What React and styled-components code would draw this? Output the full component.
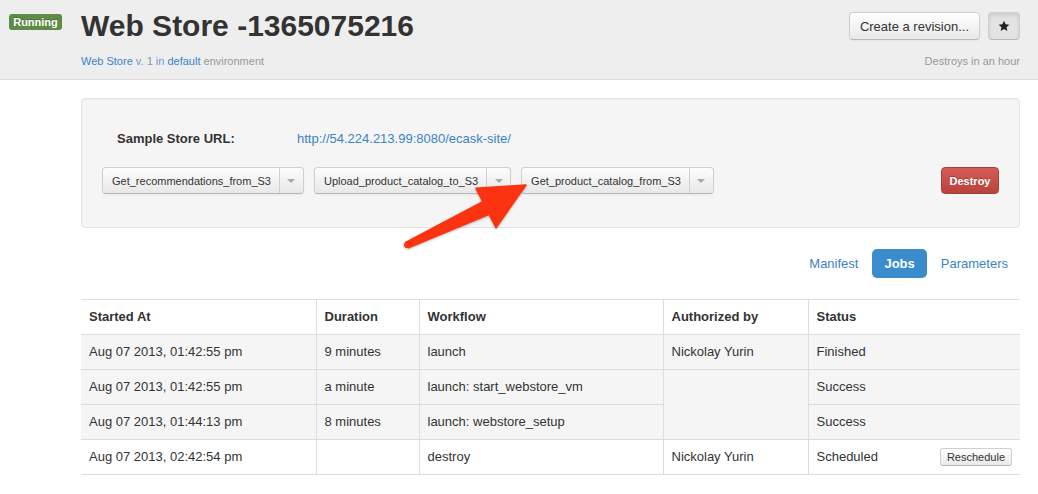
import styled, { createGlobalStyle } from 'styled-components';

const GlobalStyle = createGlobalStyle`
  html, body {
    margin: 0;
    padding: 0;
    background: #ffffff;
  }
  body {
    font-family: 'Liberation Sans', Helvetica, Arial, sans-serif;
    font-size: 13px;
    color: #333333;
  }
`;

const Page = styled.div`
  position: relative;
  width: 1038px;
  min-height: 494px;
  overflow: hidden;
`;

const Header = styled.header`
  display: flex;
  align-items: flex-start;
  background: #eeeeee;
  border-bottom: 1px solid #dddddd;
  padding: 12px 18px 10px 9px;
`;

const StatusBadge = styled.span`
  flex-shrink: 0;
  width: 53px;
  height: 16px;
  margin: 2px 19px 0 0;
  box-sizing: border-box;
  border-radius: 3px;
  background: #5e8c47;
  color: #ffffff;
  font-size: 11px;
  font-weight: 700;
  line-height: 16px;
  text-align: center;
  text-shadow: 0 -1px 0 rgba(0, 0, 0, 0.25);
`;

const TitleBlock = styled.div`
  flex: 1;
`;

const Title = styled.h1`
  margin: 0;
  font-size: 30px;
  line-height: 28px;
  font-weight: 700;
  color: #333333;
`;

const Meta = styled.div`
  margin-top: 13px;
  font-size: 11px;
  line-height: 16px;
  color: #999999;
  text-align: ${({ $align }) => $align || 'left'};
`;

const MetaLink = styled.a`
  color: ${({ $muted }) => ($muted ? '#6f9cc6' : '#3a83c4')};
  text-decoration: none;
`;

const Actions = styled.div`
  display: flex;
  flex-direction: column;
  align-items: flex-end;
`;

const ActionRow = styled.div`
  display: flex;
  gap: 8px;
`;

const Button = styled.button`
  height: 28px;
  padding: 0 10px;
  font-family: inherit;
  font-size: 13px;
  color: #333333;
  border: 1px solid #cfcfcf;
  border-bottom-color: #b8b8b8;
  border-radius: 4px;
  background: ${({ $active }) =>
    $active ? '#e3e3e3' : 'linear-gradient(#ffffff, #e9e9e9)'};
  box-shadow: ${({ $active }) =>
    $active
      ? 'inset 0 2px 4px rgba(0, 0, 0, 0.12)'
      : 'inset 0 1px 0 rgba(255, 255, 255, 0.3), 0 1px 2px rgba(0, 0, 0, 0.05)'};
  display: inline-flex;
  align-items: center;
  justify-content: center;
  cursor: pointer;
`;

const StarButton = styled(Button)`
  width: 32px;
  padding: 0;
`;

const Content = styled.main`
  margin: 0 18px 0 81px;
  padding-top: 18px;
`;

const Well = styled.section`
  background: #f5f5f5;
  border: 1px solid #e3e3e3;
  border-radius: 4px;
  padding: 31px 20px 33px;
  box-shadow: inset 0 1px 1px rgba(0, 0, 0, 0.03);
`;

const UrlRow = styled.div`
  display: flex;
  margin: 0 0 19px 15px;
  line-height: 18px;
`;

const UrlLabel = styled.div`
  width: 180px;
  font-weight: 700;
`;

const UrlLink = styled.a`
  color: #3a83c4;
  text-decoration: none;
`;

const ControlRow = styled.div`
  display: flex;
  align-items: center;
  gap: 10px;
`;

const SplitGroup = styled.div`
  display: flex;
  height: 27px;
  border: 1px solid #d0d0d0;
  border-bottom-color: #b9b9b9;
  border-radius: 4px;
  background: linear-gradient(#fdfdfd, #e8e8e8);
  box-shadow: 0 1px 2px rgba(0, 0, 0, 0.06);
  box-sizing: border-box;
`;

const SplitMain = styled.span`
  display: flex;
  align-items: center;
  padding: 0 8px 0 9px;
  font-size: 11px;
  color: #333333;
  border-right: 1px solid #cfcfcf;
`;

const SplitCaret = styled.span`
  width: 23px;
  display: flex;
  align-items: center;
  justify-content: center;

  &::after {
    content: '';
    border-left: 4px solid transparent;
    border-right: 4px solid transparent;
    border-top: 4px solid #a8a8a8;
  }
`;

const DangerButton = styled.button`
  margin-left: auto;
  height: 27px;
  width: 58px;
  padding: 0;
  font-family: inherit;
  font-size: 11px;
  font-weight: 700;
  color: #ffffff;
  text-shadow: 0 -1px 0 rgba(0, 0, 0, 0.25);
  border: 1px solid #a9403a;
  border-radius: 4px;
  background: linear-gradient(#d65d55, #b8423c);
`;

const Tabs = styled.nav`
  display: flex;
  justify-content: flex-end;
  gap: 2px;
  margin: 21px 0;
`;

const Tab = styled.a`
  padding: 6px 12px;
  line-height: 17px;
  font-size: 13px;
  border-radius: 5px;
  text-decoration: none;
  color: ${({ $active }) => ($active ? '#ffffff' : '#3a83c4')};
  background: ${({ $active }) => ($active ? '#3b8ccd' : 'transparent')};
  font-weight: ${({ $active }) => ($active ? 700 : 400)};
`;

const Table = styled.table`
  width: 100%;
  border-collapse: collapse;
  table-layout: fixed;
  border-top: 1px solid #dddddd;
  border-bottom: 1px solid #dddddd;
`;

const Col = styled.col`
  width: ${({ $w }) => $w}px;
`;

const Th = styled.th`
  padding: 8px;
  line-height: 18px;
  text-align: left;
  font-weight: 700;
  border-left: 1px solid #dddddd;
  border-bottom: 1px solid #dddddd;
  background: #ffffff;

  &:first-child {
    border-left: none;
  }
`;

const Td = styled.td`
  padding: 8px;
  line-height: 18px;
  vertical-align: top;
  border-top: 1px solid #dddddd;
  border-left: 1px solid #dddddd;
  background: ${({ $shade }) => ($shade ? '#f5f5f5' : '#ffffff')};

  &:first-child {
    border-left: none;
  }
`;

const SmallButton = styled.button`
  float: right;
  height: 18px;
  padding: 0 6px;
  font-family: inherit;
  font-size: 11px;
  color: #333333;
  border: 1px solid #cfcfcf;
  border-bottom-color: #b5b5b5;
  border-radius: 3px;
  background: linear-gradient(#ffffff, #e8e8e8);
`;

const ArrowOverlay = styled.svg`
  position: absolute;
  left: 400px;
  top: 180px;
  pointer-events: none;
  filter: drop-shadow(0 1px 1px rgba(0, 0, 0, 0.25));
`;

const SPLITS = [
  'Get_recommendations_from_S3',
  'Upload_product_catalog_to_S3',
  'Get_product_catalog_from_S3',
];

const COLUMNS = [
  { label: 'Started At', w: 235 },
  { label: 'Duration', w: 103 },
  { label: 'Workflow', w: 244 },
  { label: 'Authorized by', w: 145 },
  { label: 'Status', w: 212 },
];

function StarIcon() {
  return (
    <svg width="12" height="12" viewBox="0 0 24 24">
      <path
        d="M12 1.5l3.2 7 7.6.8-5.7 5.1 1.6 7.6L12 18.1 5.3 22l1.6-7.6L1.2 9.3l7.6-.8z"
        fill="#222222"
      />
    </svg>
  );
}

export default function App() {
  return (
    <Page>
      <GlobalStyle />
      <Header>
        <StatusBadge>Running</StatusBadge>
        <TitleBlock>
          <Title>Web Store -1365075216</Title>
          <Meta>
            <MetaLink href="#">Web Store</MetaLink>
            <MetaLink $muted href="#"> v. 1 in </MetaLink>
            <MetaLink href="#">default</MetaLink> environment
          </Meta>
        </TitleBlock>
        <Actions>
          <ActionRow>
            <Button>Create a revision...</Button>
            <StarButton $active aria-label="Favorite">
              <StarIcon />
            </StarButton>
          </ActionRow>
          <Meta $align="right">Destroys in an hour</Meta>
        </Actions>
      </Header>

      <Content>
        <Well>
          <UrlRow>
            <UrlLabel>Sample Store URL:</UrlLabel>
            <UrlLink href="#">http://54.224.213.99:8080/ecask-site/</UrlLink>
          </UrlRow>
          <ControlRow>
            {SPLITS.map((name) => (
              <SplitGroup key={name}>
                <SplitMain>{name}</SplitMain>
                <SplitCaret />
              </SplitGroup>
            ))}
            <DangerButton>Destroy</DangerButton>
          </ControlRow>
        </Well>

        <Tabs>
          <Tab href="#">Manifest</Tab>
          <Tab href="#" $active>Jobs</Tab>
          <Tab href="#">Parameters</Tab>
        </Tabs>

        <Table>
          <colgroup>
            {COLUMNS.map((c) => (
              <Col key={c.label} $w={c.w} />
            ))}
          </colgroup>
          <thead>
            <tr>
              {COLUMNS.map((c) => (
                <Th key={c.label}>{c.label}</Th>
              ))}
            </tr>
          </thead>
          <tbody>
            <tr>
              <Td $shade>Aug 07 2013, 01:42:55 pm</Td>
              <Td $shade>9 minutes</Td>
              <Td $shade>launch</Td>
              <Td $shade>Nickolay Yurin</Td>
              <Td $shade>Finished</Td>
            </tr>
            <tr>
              <Td $shade>Aug 07 2013, 01:42:55 pm</Td>
              <Td $shade>a minute</Td>
              <Td $shade>launch: start_webstore_vm</Td>
              <Td $shade rowSpan={2}></Td>
              <Td $shade>Success</Td>
            </tr>
            <tr>
              <Td $shade>Aug 07 2013, 01:44:13 pm</Td>
              <Td $shade>8 minutes</Td>
              <Td $shade>launch: webstore_setup</Td>
              <Td $shade>Success</Td>
            </tr>
            <tr>
              <Td>Aug 07 2013, 02:42:54 pm</Td>
              <Td></Td>
              <Td>destroy</Td>
              <Td>Nickolay Yurin</Td>
              <Td>
                Scheduled
                <SmallButton>Reschedule</SmallButton>
              </Td>
            </tr>
          </tbody>
        </Table>
      </Content>

      <ArrowOverlay width="135" height="75" viewBox="0 0 135 75">
        <polygon
          points="5.6,62.3 82.8,21.7 76,8.3 126,5 96,47.7 89.2,34.3 8.4,67.7"
          fill="#fb3311"
          stroke="#fb3311"
          strokeWidth="1.5"
          strokeLinejoin="round"
        />
        <circle cx="7" cy="65" r="3" fill="#fb3311" />
      </ArrowOverlay>
    </Page>
  );
}
